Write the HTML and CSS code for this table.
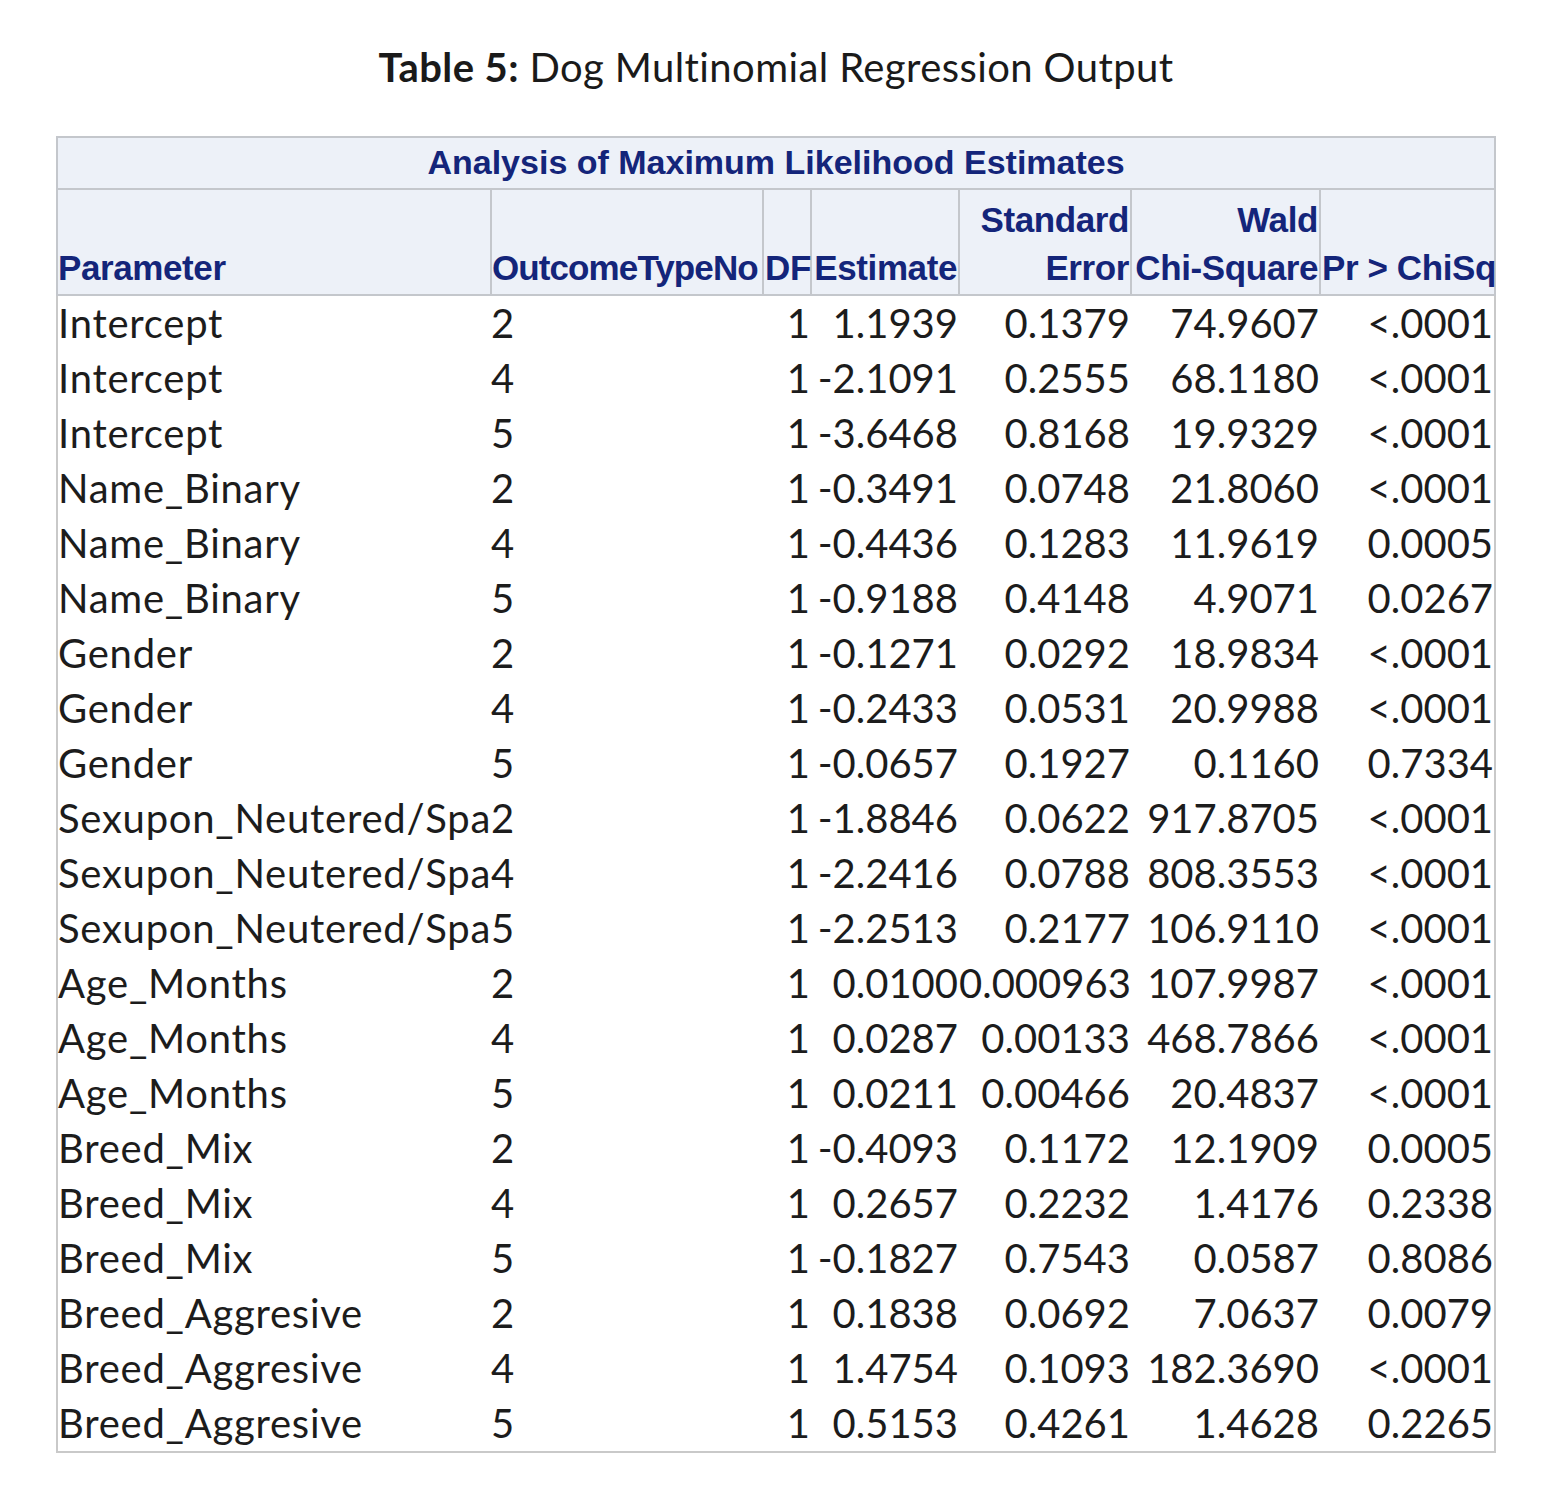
FILE: index.html
```html
<!DOCTYPE html>
<html lang="en">
<head>
<meta charset="utf-8">
<title>Table 5: Dog Multinomial Regression Output</title>
<link rel="stylesheet" href="styles.css">
</head>
<body>
<h1 class="title"><span class="title-label">Table 5:</span> Dog Multinomial Regression Output</h1>
<table class="mle">
  <colgroup>
    <col class="c-param">
    <col class="c-outcome">
    <col class="c-df">
    <col class="c-est">
    <col class="c-se">
    <col class="c-wald">
    <col class="c-p">
  </colgroup>
  <thead>
    <tr class="caption-row"><th colspan="7" class="caption">Analysis of Maximum Likelihood Estimates</th></tr>
    <tr class="head-row">
      <th class="left">Parameter</th>
      <th class="left tight">OutcomeTypeNo</th>
      <th class="right">DF</th>
      <th class="right">Estimate</th>
      <th class="right">Standard<br>Error</th>
      <th class="right">Wald<br>Chi-Square</th>
      <th class="right">Pr &gt; ChiSq</th>
    </tr>
  </thead>
  <tbody>
    <tr><td class="name">Intercept</td><td class="left">2</td><td>1</td><td>1.1939</td><td>0.1379</td><td>74.9607</td><td>&lt;.0001</td></tr>
    <tr><td class="name">Intercept</td><td class="left">4</td><td>1</td><td>-2.1091</td><td>0.2555</td><td>68.1180</td><td>&lt;.0001</td></tr>
    <tr><td class="name">Intercept</td><td class="left">5</td><td>1</td><td>-3.6468</td><td>0.8168</td><td>19.9329</td><td>&lt;.0001</td></tr>
    <tr><td class="name">Name_Binary</td><td class="left">2</td><td>1</td><td>-0.3491</td><td>0.0748</td><td>21.8060</td><td>&lt;.0001</td></tr>
    <tr><td class="name">Name_Binary</td><td class="left">4</td><td>1</td><td>-0.4436</td><td>0.1283</td><td>11.9619</td><td>0.0005</td></tr>
    <tr><td class="name">Name_Binary</td><td class="left">5</td><td>1</td><td>-0.9188</td><td>0.4148</td><td>4.9071</td><td>0.0267</td></tr>
    <tr><td class="name">Gender</td><td class="left">2</td><td>1</td><td>-0.1271</td><td>0.0292</td><td>18.9834</td><td>&lt;.0001</td></tr>
    <tr><td class="name">Gender</td><td class="left">4</td><td>1</td><td>-0.2433</td><td>0.0531</td><td>20.9988</td><td>&lt;.0001</td></tr>
    <tr><td class="name">Gender</td><td class="left">5</td><td>1</td><td>-0.0657</td><td>0.1927</td><td>0.1160</td><td>0.7334</td></tr>
    <tr><td class="name">Sexupon_Neutered/Spa</td><td class="left">2</td><td>1</td><td>-1.8846</td><td>0.0622</td><td>917.8705</td><td>&lt;.0001</td></tr>
    <tr><td class="name">Sexupon_Neutered/Spa</td><td class="left">4</td><td>1</td><td>-2.2416</td><td>0.0788</td><td>808.3553</td><td>&lt;.0001</td></tr>
    <tr><td class="name">Sexupon_Neutered/Spa</td><td class="left">5</td><td>1</td><td>-2.2513</td><td>0.2177</td><td>106.9110</td><td>&lt;.0001</td></tr>
    <tr><td class="name">Age_Months</td><td class="left">2</td><td>1</td><td>0.0100</td><td>0.000963</td><td>107.9987</td><td>&lt;.0001</td></tr>
    <tr><td class="name">Age_Months</td><td class="left">4</td><td>1</td><td>0.0287</td><td>0.00133</td><td>468.7866</td><td>&lt;.0001</td></tr>
    <tr><td class="name">Age_Months</td><td class="left">5</td><td>1</td><td>0.0211</td><td>0.00466</td><td>20.4837</td><td>&lt;.0001</td></tr>
    <tr><td class="name">Breed_Mix</td><td class="left">2</td><td>1</td><td>-0.4093</td><td>0.1172</td><td>12.1909</td><td>0.0005</td></tr>
    <tr><td class="name">Breed_Mix</td><td class="left">4</td><td>1</td><td>0.2657</td><td>0.2232</td><td>1.4176</td><td>0.2338</td></tr>
    <tr><td class="name">Breed_Mix</td><td class="left">5</td><td>1</td><td>-0.1827</td><td>0.7543</td><td>0.0587</td><td>0.8086</td></tr>
    <tr><td class="name">Breed_Aggresive</td><td class="left">2</td><td>1</td><td>0.1838</td><td>0.0692</td><td>7.0637</td><td>0.0079</td></tr>
    <tr><td class="name">Breed_Aggresive</td><td class="left">4</td><td>1</td><td>1.4754</td><td>0.1093</td><td>182.3690</td><td>&lt;.0001</td></tr>
    <tr><td class="name">Breed_Aggresive</td><td class="left">5</td><td>1</td><td>0.5153</td><td>0.4261</td><td>1.4628</td><td>0.2265</td></tr>
  </tbody>
</table>
</body>
</html>
```
FILE: styles.css
```css
html, body {
  margin: 0;
  padding: 0;
  background: #ffffff;
}

body {
  font-family: Lato, "Open Sans", sans-serif;
  color: #1a1a1a;
}

.title {
  margin: 0;
  padding-top: 44px;
  height: 94px;
  box-sizing: border-box;
  text-align: center;
  font-size: 40px;
  font-weight: 400;
  line-height: 46px;
  letter-spacing: 0.4px;
  color: #1a1a1a;
}

.title-label {
  font-weight: 700;
}

.mle {
  margin-left: 56px;
  margin-top: 42px;
  border-collapse: collapse;
  table-layout: fixed;
  width: 1438px;
  border: 2px solid #c9c9c9;
}

.c-param { width: 434px; }
.c-outcome { width: 272px; }
.c-df { width: 48px; }
.c-est { width: 148px; }
.c-se { width: 172px; }
.c-wald { width: 189px; }
.c-p { width: 175px; }

.mle th {
  background: #edf1f8;
  color: #14257a;
  font-family: "Liberation Sans", Arial, sans-serif;
  font-weight: 700;
  font-size: 35px;
  letter-spacing: -0.4px;
  border: 2px solid #c4c7cc;
  padding: 0 1px;
  white-space: nowrap;
  overflow: visible;
}

.mle th.caption {
  height: 48px;
  font-size: 34px;
  letter-spacing: 0;
  text-align: center;
  line-height: 44px;
  padding: 0 0 2px 0;
}

.head-row th {
  height: 102px;
  line-height: 48px;
  vertical-align: bottom;
  padding-bottom: 2px;
}

.mle th.left { text-align: left; padding-left: 0; }
.mle th.right { text-align: right; }
.mle th.tight { letter-spacing: -0.9px; }

.mle td {
  font-family: Lato, "Open Sans", sans-serif;
  font-size: 40px;
  line-height: 55px;
  height: 55px;
  padding: 0 1px 0 0;
  text-align: right;
  white-space: nowrap;
  color: #1c1c1c;
  border: none;
}

.mle td.left { text-align: left; }

.mle td.name {
  text-align: left;
  letter-spacing: 0.75px;
}
```
